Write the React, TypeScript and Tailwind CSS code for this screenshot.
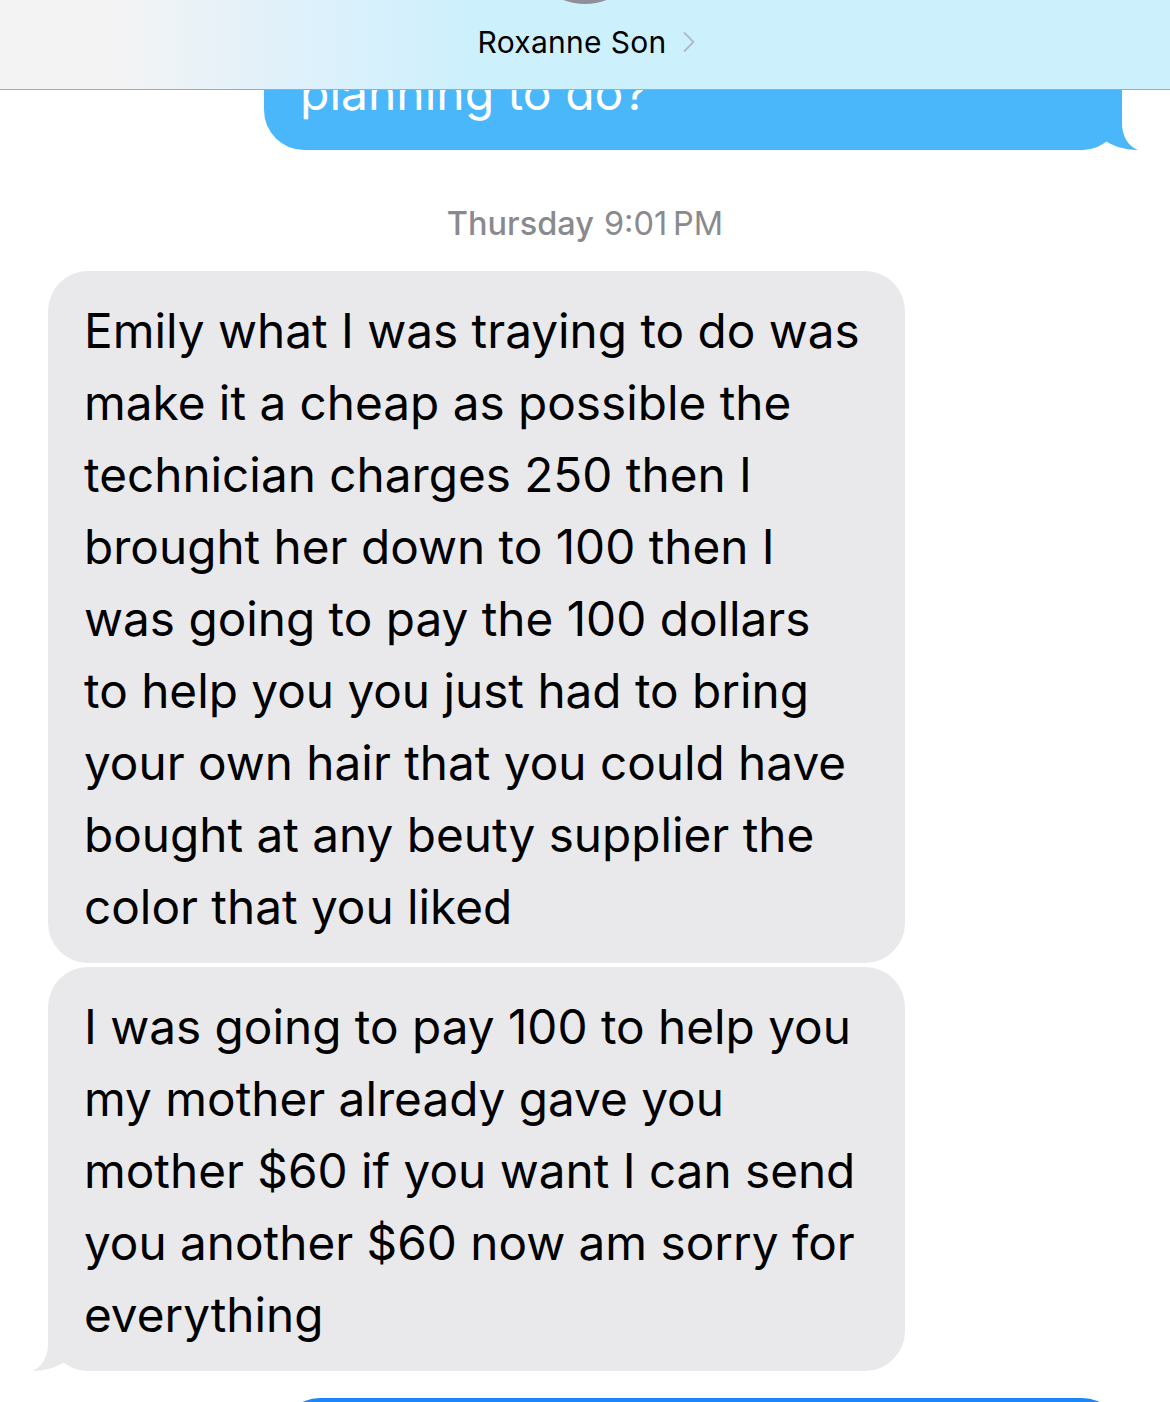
import { ChevronRight } from "lucide-react";

const font = { fontFamily: "Inter, 'Noto Sans', sans-serif" };

const firstLines = [
	"Emily what I was traying to do was",
	"make it a cheap as possible the",
	"technician charges 250 then I",
	"brought her down to 100 then I",
	"was going to pay the 100 dollars",
	"to help you you just had to bring",
	"your own hair that you could have",
	"bought at any beuty supplier the",
	"color that you liked",
];

const secondLines = [
	"I was going to pay 100 to help you",
	"my mother already gave you",
	"mother $60 if you want I can send",
	"you another $60 now am sorry for",
	"everything",
];

function Lines({ lines }: { lines: string[] }) {
	return (
		<>
			{lines.map((l) => (
				<span key={l} className="block whitespace-nowrap">
					{l}
				</span>
			))}
		</>
	);
}

export default function App() {
	return (
		<div
			className="relative w-[1170px] h-[1402px] overflow-hidden bg-white"
			style={font}
		>
			{/* nav bar over the messages */}
			<div className="absolute top-0 left-0 right-0 z-10 h-[90px] border-b border-[#a9a9a9] bg-gradient-to-r from-[#f3f3f4] from-10% via-[#dff1fb] via-25% to-[#cdf0fd] to-40%">
				<div className="absolute left-[525px] top-[-116px] w-[120px] h-[120px] rounded-full bg-[#8e8f98]" />
				<div className="flex items-center justify-center pt-[22px] pl-[14px]">
					<span className="text-[30px] leading-[40px] text-black tracking-[0.3px]">
						Roxanne Son
					</span>
					<ChevronRight
						className="ml-[4px] text-[#aebbc6]"
						size={36}
						strokeWidth={1.2}
					/>
				</div>
			</div>

			<div className="flex flex-col">
				{/* outgoing, mostly under the bar */}
				<div className="flex justify-end pr-[48px]">
					<div className="relative w-[858px] rounded-[40px] bg-[#4ab7fb] px-[36px] pt-[57px] pb-[21px] text-white text-[48px] leading-[72px]">
						planning to do?
						<svg
							className="absolute right-[-16px] bottom-0"
							width="60"
							height="40"
							viewBox="0 0 60 40"
						>
							<path
								d="M44 0 L44 13 C44 26 50 36 60 40 C46 40 34 36 25 29 C18 36 10 40 0 40 L0 0 Z"
								fill="#4ab7fb"
							/>
						</svg>
					</div>
				</div>

				<div className="flex justify-center pt-[54px] pb-[27px] text-[32.5px] leading-[40px] text-[#8a8a8e]">
					<span className="font-medium">Thursday</span>
					<span className="ml-[10px]">9:01{"\u2009"}PM</span>
				</div>

				<div className="flex flex-col gap-[4px] pl-[48px]">
					<div className="w-[857px] rounded-[40px] bg-[#e9e9eb] px-[36px] pt-[24px] pb-[20px] text-black text-[47.7px] leading-[72px]">
						<Lines lines={firstLines} />
					</div>
					<div className="relative w-[857px] rounded-[40px] bg-[#e9e9eb] px-[36px] pt-[24px] pb-[20px] text-black text-[47.7px] leading-[72px]">
						<Lines lines={secondLines} />
						<svg
							className="absolute left-[-16px] bottom-0"
							width="60"
							height="40"
							viewBox="0 0 60 40"
						>
							<path
								d="M16 0 L16 13 C16 26 10 36 0 40 C14 40 26 36 35 29 C42 36 50 40 60 40 L60 0 Z"
								fill="#e9e9eb"
							/>
						</svg>
					</div>
				</div>

				<div className="flex justify-end pr-[48px] pt-[27px]">
					<div className="w-[842px] h-[120px] rounded-[40px] bg-[#1b86f7]" />
				</div>
			</div>
		</div>
	);
}
